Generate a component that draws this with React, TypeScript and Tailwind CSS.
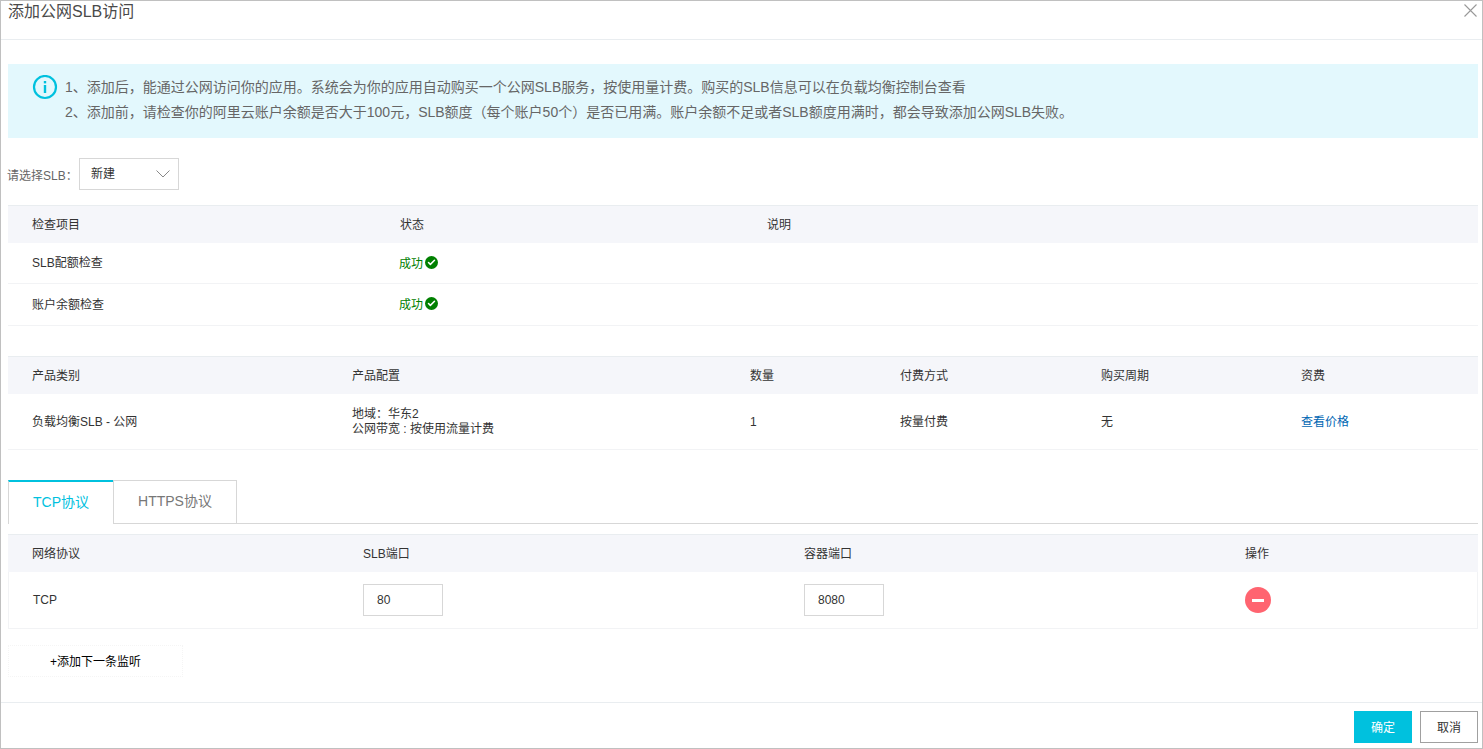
import { Check } from "lucide-react";

const font = "font-['Liberation_Sans','Noto_Sans_CJK_SC',sans-serif]";

function HeadRow({ cols, labels }: { cols: string; labels: string[] }) {
  return (
    <div className={`grid ${cols} h-[38px] items-center bg-[#f5f6fa] border-t border-[#e9edf0] text-xs text-[#333]`}>
      {labels.map((l) => (
        <div key={l} className="pl-6">{l}</div>
      ))}
    </div>
  );
}

function Success() {
  return (
    <span className="-ml-px flex items-center pt-px text-xs text-[#008000]">
      成功
      <span className="-mt-[3px] ml-0.5 flex h-[13px] w-[13px] items-center justify-center rounded-full bg-[#008000]">
        <Check size={9} strokeWidth={4} className="text-white" />
      </span>
    </span>
  );
}

const checkCols = "grid-cols-[368px_367px_1fr]";
const productCols = "grid-cols-[320px_398px_150px_201px_200px_1fr]";
const portCols = "grid-cols-[331px_441px_441px_1fr]";

export default function App() {
  return (
    <div className={`${font} flex h-[749px] w-[1483px] flex-col overflow-hidden border border-[#c0c0c0] bg-white text-[#333]`}>
      <div className="flex h-[39px] shrink-0 justify-between border-b border-[#e9edf0] pl-[7px] pr-[5px]">
        <span className="text-base leading-[22px] text-[#4a4a4a]">添加公网SLB访问</span>
        <svg width="13" height="13" viewBox="0 0 13 13" className="mt-[3px] text-[#999]">
          <path d="M0.5 0.5L12.5 12.5M12.5 0.5L0.5 12.5" fill="none" stroke="currentColor" strokeWidth="1.1" />
        </svg>
      </div>

      <div className="flex flex-1 flex-col pl-[7px] pr-1">
        <div className="mt-6 flex h-[74px] bg-[#e3f8fd] pl-6 pt-[11px] text-sm leading-[25px] text-[#666]">
          <svg width="26" height="26" viewBox="0 0 26 26" className="shrink-0">
            <circle cx="13" cy="12" r="11" fill="none" stroke="#00c1de" strokeWidth="2.2" />
            <rect x="11.8" y="10" width="2.4" height="8" fill="#00c1de" />
            <rect x="11.8" y="6" width="2.4" height="2.4" fill="#00c1de" />
          </svg>
          <div className="ml-[7px]">
            <p>1、添加后，能通过公网访问你的应用。系统会为你的应用自动购买一个公网SLB服务，按使用量计费。购买的SLB信息可以在负载均衡控制台查看</p>
            <p>2、添加前，请检查你的阿里云账户余额是否大于100元，SLB额度（每个账户50个）是否已用满。账户余额不足或者SLB额度用满时，都会导致添加公网SLB失败。</p>
          </div>
        </div>

        <div className="mt-5 flex items-center">
          <span className="-ml-px mt-[3px] w-[72px] text-xs text-[#666]">请选择SLB：</span>
          <div className="flex h-8 w-[100px] items-center justify-between border border-[#d7d7d7] pl-[11px] pr-2 text-xs">
            <span>新建</span>
            <svg width="14" height="8" viewBox="0 0 14 8" className="text-[#888]">
              <path d="M0.5 0.5L7 7L13.5 0.5" fill="none" stroke="currentColor" strokeWidth="1" />
            </svg>
          </div>
        </div>

        <div className="mt-[15px]">
          <HeadRow cols={checkCols} labels={["检查项目", "状态", "说明"]} />
          <div className={`grid ${checkCols} h-[41px] items-center border-b border-[#f2f3f5] text-xs`}>
            <div className="pl-6">SLB配额检查</div>
            <div className="pl-6"><Success /></div>
          </div>
          <div className={`grid ${checkCols} h-[42px] items-center border-b border-[#f2f3f5] text-xs`}>
            <div className="pl-6">账户余额检查</div>
            <div className="pl-6"><Success /></div>
          </div>
        </div>

        <div className="mt-[30px]">
          <HeadRow cols={productCols} labels={["产品类别", "产品配置", "数量", "付费方式", "购买周期", "资费"]} />
          <div className={`grid ${productCols} h-[56px] items-center border-b border-[#f2f3f5] text-xs`}>
            <div className="pl-6">负载均衡SLB - 公网</div>
            <div className="pl-6 leading-[15px]">
              <p>地域：华东2</p>
              <p>公网带宽 : 按使用流量计费</p>
            </div>
            <div className="pl-6">1</div>
            <div className="pl-6">按量付费</div>
            <div className="pl-6">无</div>
            <div className="pl-6 text-[#0066b3]">查看价格</div>
          </div>
        </div>

        <div className="mt-[30px] flex h-[44px] border-b border-[#d7d7d7] text-sm">
          <div className="-mb-px flex w-[105px] items-center justify-center border-t-2 border-l border-[#00c1de] border-l-[#d7d7d7] bg-white pb-[3px] text-[#00c1de]">TCP协议</div>
          <div className="flex w-[124px] items-center justify-center border border-b-0 border-[#d7d7d7] pb-[3px] text-[#777]">HTTPS协议</div>
        </div>

        <div className="mt-[10px]">
          <HeadRow cols={portCols} labels={["网络协议", "SLB端口", "容器端口", "操作"]} />
          <div className={`grid ${portCols} h-[57px] items-center border-x border-b border-[#f2f3f5] text-xs`}>
            <div className="pl-6">TCP</div>
            <div className="pl-6">
              <div className="-ml-px flex h-8 w-20 items-center border border-[#d7d7d7] pl-[13px]">80</div>
            </div>
            <div className="pl-6">
              <div className="-ml-px flex h-8 w-20 items-center border border-[#d7d7d7] pl-[13px]">8080</div>
            </div>
            <div className="pl-6">
              <div className="-ml-px flex h-[26px] w-[26px] items-center justify-center rounded-full bg-[#ff6470]">
                <div className="h-[3px] w-3 bg-white" />
              </div>
            </div>
          </div>
        </div>

        <div className="mt-4 flex h-8 w-[175px] items-center justify-center border border-dotted border-[#f5f5f5] pt-0.5 text-xs text-black">
          +添加下一条监听
        </div>
      </div>

      <div className="flex h-[46px] shrink-0 justify-end gap-2 border-t border-[#e9edf0] pr-1 pt-2">
        <button className="h-8 w-[58px] bg-[#00c1de] pt-0.5 text-xs text-white">确定</button>
        <button className="h-8 w-[58px] border border-[#a0a0a0] pt-0.5 text-xs text-[#333]">取消</button>
      </div>
    </div>
  );
}
